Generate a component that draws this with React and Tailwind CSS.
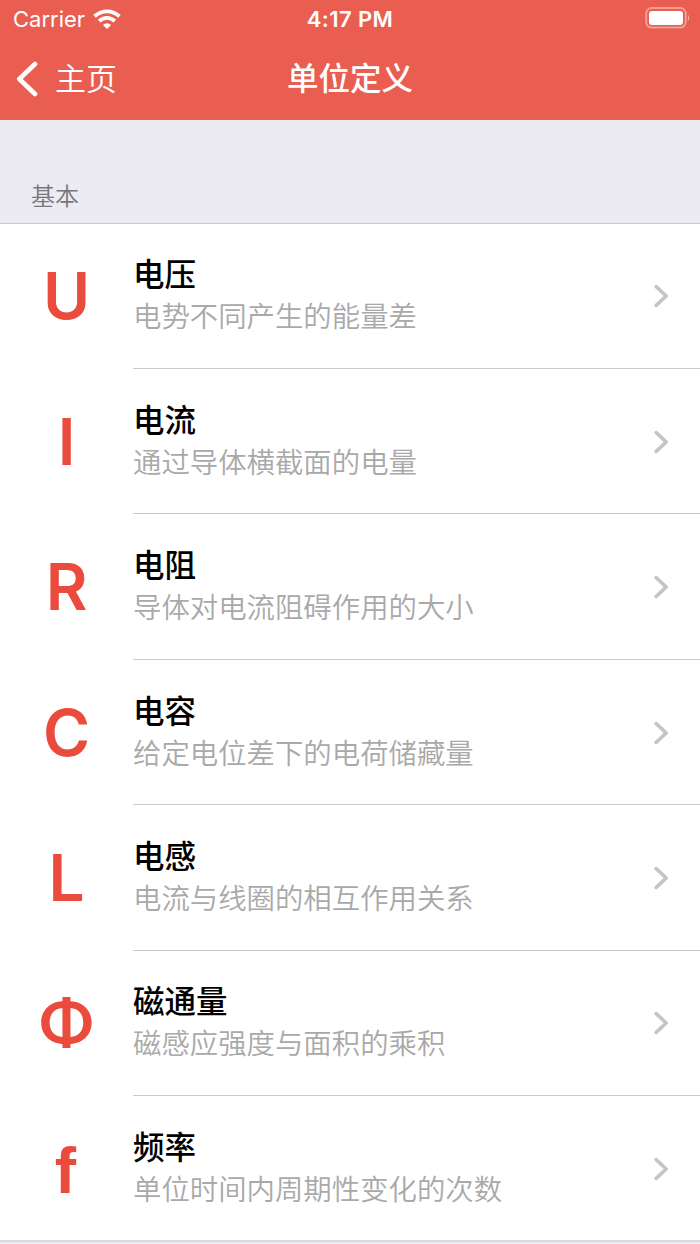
import React from 'react';

const units = [
  { symbol: 'U', name: '电压', desc: '电势不同产生的能量差' },
  { symbol: 'I', name: '电流', desc: '通过导体横截面的电量' },
  { symbol: 'R', name: '电阻', desc: '导体对电流阻碍作用的大小' },
  { symbol: 'C', name: '电容', desc: '给定电位差下的电荷储藏量' },
  { symbol: 'L', name: '电感', desc: '电流与线圈的相互作用关系' },
  { symbol: 'Φ', name: '磁通量', desc: '磁感应强度与面积的乘积' },
  { symbol: 'f', name: '频率', desc: '单位时间内周期性变化的次数', font: "pt-1 pr-0.5 font-bold font-['Liberation_Sans',sans-serif]" },
];

const WifiIcon = () => (
  <svg className="mb-px" width="28" height="20" viewBox="0 0 28 20" fill="none" stroke="#fff" strokeWidth="3.8">
    <path d="M1.6 7.4A17.6 17.6 0 0 1 26.4 7.4" />
    <path d="M6.2 12.2A11 11 0 0 1 21.8 12.2" />
    <path d="M14 20L9.9 16A5.8 5.8 0 0 1 18.1 16Z" fill="#fff" stroke="none" />
  </svg>
);

const BatteryIcon = () => (
  <svg className="-mr-1 mb-0.5" width="46" height="24" viewBox="0 0 46 24" fill="none">
    <rect x="1.2" y="2" width="39.6" height="19.6" rx="5.5" stroke="#fff" strokeOpacity="0.4" strokeWidth="2" />
    <rect x="4" y="5" width="34" height="14" rx="3" fill="#fff" />
    <path d="M43 9C44.6 10 44.6 14 43 15Z" fill="#fff" fillOpacity="0.5" />
  </svg>
);

const StatusBar = () => (
  <div className="flex h-[38px] items-center px-[13px] text-white">
    <div className="flex flex-1 items-center gap-2">
      <span className="text-[22px] leading-[38px]">Carrier</span>
      <WifiIcon />
    </div>
    <span className="text-[22px] font-semibold leading-[38px] tracking-[0.4px]">4:17 PM</span>
    <div className="flex flex-1 justify-end">
      <BatteryIcon />
    </div>
  </div>
);

const NavBar = () => (
  <div className="flex h-[82px] items-center px-4 text-white">
    <button className="flex flex-1 items-center gap-[17px]">
      <svg width="22" height="36" viewBox="0 0 22 36" fill="none" stroke="#fff" strokeWidth="4.6" strokeLinecap="round" strokeLinejoin="round">
        <path d="M19 3L3.3 18L19 33" />
      </svg>
      <span className="text-[31px] font-[350] leading-10">主页</span>
    </button>
    <h1 className="text-[31.5px] font-medium leading-10">单位定义</h1>
    <div className="flex-1" />
  </div>
);

const UnitRow = ({ unit, last }) => (
  <li className="flex h-[145.45px]">
    <div className={`flex w-[133px] items-center justify-center text-[64px] leading-none text-[#eb4b3c] ${unit.font || 'font-semibold'}`}>
      {unit.symbol}
    </div>
    <div className={`flex flex-1 items-center justify-between pr-[31px] pt-px ${last ? '' : 'border-b border-[#c9c9cc]'}`}>
      <div>
        <h2 className="text-[31.5px] font-medium leading-[42px] text-black">{unit.name}</h2>
        <p className="text-[28.4px] font-[350] leading-[42px] text-[#a9a9a9]">{unit.desc}</p>
      </div>
      <svg width="15" height="24" viewBox="0 0 15 24" fill="none" stroke="#c5c5c8" strokeWidth="3.6" strokeLinecap="round" strokeLinejoin="round">
        <path d="M2.2 2.6L12.2 12L2.2 21.4" />
      </svg>
    </div>
  </li>
);

const App = () => {
  return (
    <div className="h-[1244px] w-[700px] overflow-hidden bg-[#ebebf1] font-['Inter','Noto_Sans_CJK_SC',sans-serif]">
      <header className="h-[120px] bg-[#e95e50]">
        <StatusBar />
        <NavBar />
      </header>
      <div className="flex h-[103.5px] items-end border-b border-[#c9c9cc] px-[31px] pb-[7.5px]">
        <span className="text-[24px] font-[350] leading-9 text-[#77777c]">基本</span>
      </div>
      <ul className="h-[1018.5px] border-b-2 border-[#d9d9df] bg-white">
        {units.map((unit, i) => (
          <UnitRow key={unit.symbol} unit={unit} last={i === units.length - 1} />
        ))}
      </ul>
    </div>
  );
};

export default App;
